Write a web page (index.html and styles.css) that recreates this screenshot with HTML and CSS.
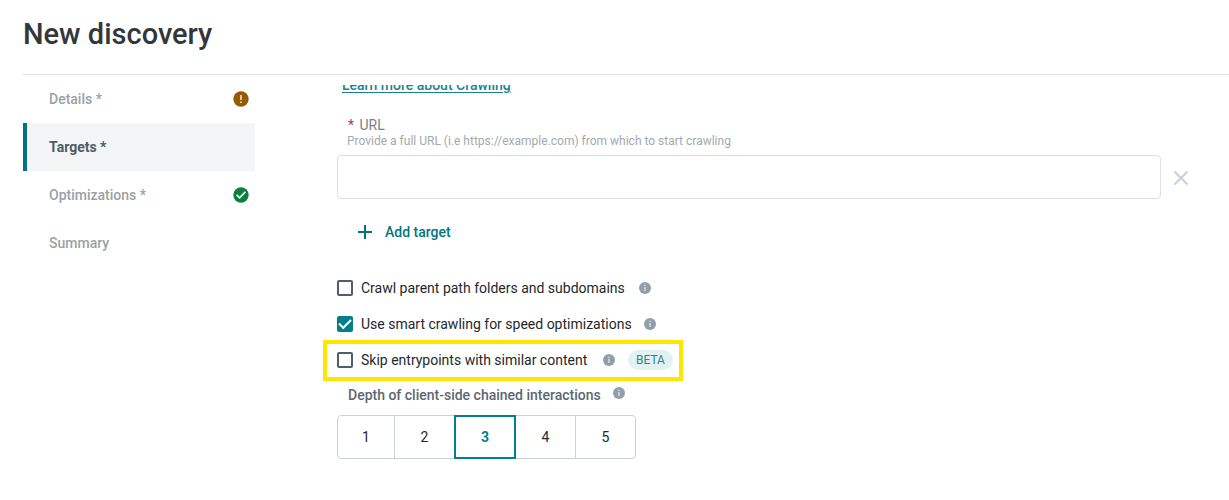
FILE: index.html
```html
<!DOCTYPE html>
<html lang="en">
<head>
<meta charset="utf-8">
<title>New discovery</title>
<link rel="stylesheet" href="styles.css">
</head>
<body>
<svg class="sprite" aria-hidden="true">
  <symbol id="info" viewBox="0 0 12 12">
    <circle cx="6" cy="6" r="6" fill="#919fa8"/>
    <path d="M6 2.7v1.2M6 5v4" stroke="#e8edef" stroke-width="1.2"/>
  </symbol>
</svg>
<header class="header">
  <h1 class="title">New discovery</h1>
</header>
<div class="layout">
  <nav class="steps" aria-label="Steps">
    <a class="step" href="#details">Details *
      <svg class="status" viewBox="0 0 16 16" aria-hidden="true"><circle cx="8" cy="8" r="7.7" fill="#965a00"/><path d="M8 4v5M8 10.5v1.6" stroke="#f3e6d0" stroke-width="1.6"/></svg>
    </a>
    <a class="step step-active" href="#targets" aria-current="step">Targets *</a>
    <a class="step" href="#optimizations">Optimizations *
      <svg class="status" viewBox="0 0 16 16" aria-hidden="true"><circle cx="8" cy="8" r="7.7" fill="#0b7f3f"/><path d="M3.6 7.8l3 3 5.8-6" fill="none" stroke="#fff" stroke-width="1.6"/></svg>
    </a>
    <a class="step" href="#summary">Summary</a>
  </nav>
  <main class="panel">
    <a class="learn" href="#crawling">Learn more about Crawling</a>
    <div class="field">
      <label class="label" for="url"><span class="required">*</span> URL</label>
      <p class="hint" id="url-hint">Provide a full URL (i.e https://example.com) from which to start crawling</p>
      <div class="entry">
        <input class="input" id="url" type="text" aria-describedby="url-hint">
        <button class="remove" type="button" aria-label="Remove target">
          <svg class="remove-icon" viewBox="0 0 16 16" aria-hidden="true"><path d="M1.5 1.5l13 13M14.5 1.5l-13 13" stroke="#c8d2d6" stroke-width="2.2"/></svg>
        </button>
      </div>
    </div>
    <button class="add" type="button">
      <svg class="add-icon" viewBox="0 0 14 14" aria-hidden="true"><path d="M7 0v14M0 7h14" stroke="#007480" stroke-width="2"/></svg>
      Add target
    </button>
    <div class="options">
      <div class="option">
        <input class="check" type="checkbox" id="parent">
        <label class="label-parent" for="parent">Crawl parent path folders and subdomains</label>
        <svg class="info" aria-hidden="true"><use href="#info"/></svg>
      </div>
      <div class="option">
        <input class="check" type="checkbox" id="smart" checked>
        <label class="label-smart" for="smart">Use smart crawling for speed optimizations</label>
        <svg class="info" aria-hidden="true"><use href="#info"/></svg>
      </div>
      <div class="option option-highlight">
        <input class="check" type="checkbox" id="skip">
        <label class="label-skip" for="skip">Skip entrypoints with similar content</label>
        <svg class="info" aria-hidden="true"><use href="#info"/></svg>
        <span class="badge">BETA</span>
      </div>
    </div>
    <div class="depth-label">
      <span class="depth-text" id="depth">Depth of client-side chained interactions</span>
      <svg class="info" aria-hidden="true"><use href="#info"/></svg>
    </div>
    <div class="depth" role="group" aria-labelledby="depth">
      <button class="level" type="button">1</button>
      <button class="level" type="button">2</button>
      <button class="level level-active" type="button" aria-pressed="true">3</button>
      <button class="level" type="button">4</button>
      <button class="level" type="button">5</button>
    </div>
  </main>
</div>
</body>
</html>
```
FILE: styles.css
```css
* { box-sizing: border-box; }
body {
  margin: 0;
  background: #fff;
  color: #23282b;
  font: 14px/20px Roboto, "Noto Sans", sans-serif;
}
button, input { font: inherit; color: inherit; }
button { background: none; border: 0; padding: 0; cursor: pointer; }
.sprite { display: none; }
.header {
  margin-left: 23px;
  padding: 16px 0 22px;
  border-bottom: 1px solid #dedfe0;
}
.title {
  margin: 0;
  color: #333739;
  font-size: 29px;
  line-height: 36px;
  font-weight: 500;
}
.layout {
  display: grid;
  grid-template-columns: 232px minmax(0, 1fr);
  gap: 68px;
  padding: 0 40px 0 23px;
}
.step {
  display: flex;
  align-items: center;
  justify-content: space-between;
  height: 48px;
  padding: 0 6px 0 22px;
  border-left: 4px solid transparent;
  color: #98a2a6;
  font-weight: 500;
  text-decoration: none;
}
.step-active {
  border-color: #007480;
  background: #f3f5f7;
  color: #4d5c65;
  font-weight: 700;
}
.status { width: 16px; height: 16px; }
.panel {
  margin-top: 10px;
  padding: 0 0 24px 14px;
  overflow: hidden;
}
.learn {
  display: block;
  width: fit-content;
  margin: -10px 0 22px 5px;
  color: #1b828d;
  font-weight: 500;
  text-underline-offset: 2px;
}
.label {
  display: block;
  padding-left: 11px;
  color: #7b7f81;
  line-height: 16px;
}
.required { margin-right: 2px; color: #bf3158; }
.hint {
  margin: 0 0 6px 10px;
  color: #a1aaad;
  font-size: 12px;
  line-height: 16px;
}
.entry { display: flex; align-items: center; gap: 12px; }
.input {
  flex: 1;
  min-width: 0;
  height: 44px;
  padding: 0 12px;
  border: 1px solid #dddfe0;
  border-radius: 4px;
  background: #fff;
}
.remove { display: flex; padding-top: 2px; }
.remove-icon { width: 16px; height: 16px; }
.add {
  display: flex;
  align-items: center;
  gap: 13px;
  height: 40px;
  margin: 13px 0 18px 21px;
  color: #007480;
  font-weight: 500;
}
.add-icon { width: 14px; height: 14px; }
.option { display: flex; align-items: center; height: 36px; }
.label-parent { min-width: 273px; }
.label-smart { min-width: 278px; }
.label-skip { min-width: 237px; }
.check {
  appearance: none;
  display: grid;
  place-items: center;
  width: 16px;
  height: 16px;
  margin: 0 8px 0 0;
  border: 2px solid #4d606b;
  border-radius: 2px;
}
.check:checked { border-color: #007f8c; background: #007f8c; }
.check:checked::before {
  content: "";
  width: 10px;
  height: 5px;
  margin-bottom: 3px;
  border: solid #fff;
  border-width: 0 0 2px 2px;
  transform: rotate(-45deg);
}
.info { flex: none; width: 12px; height: 12px; margin-left: 5px; }
.option-highlight {
  width: fit-content;
  height: 41px;
  margin: -2px 0 0 -14px;
  padding: 0 6px 1px 10px;
  border: 4px solid #ffe600;
}
.badge {
  margin-left: 13px;
  padding: 0 8px;
  border-radius: 10px;
  background: #e2f2f3;
  color: #2a8790;
  font-size: 12px;
}
.depth-label {
  display: flex;
  align-items: center;
  margin: 4px 0 10px 11px;
  color: #5a6870;
  font-weight: 500;
}
.depth-text { min-width: 260px; }
.depth-label .info { margin-bottom: 4px; }
.depth { display: flex; width: fit-content; }
.level {
  width: 61px;
  height: 44px;
  margin-left: -1px;
  border: 1px solid #c9d2d6;
}
.level:first-child { width: 58px; margin-left: 0; border-radius: 4px 0 0 4px; }
.level:last-child { border-radius: 0 4px 4px 0; }
.level-active {
  z-index: 1;
  width: 62px;
  border: 2px solid #007f8c;
  color: #007f8c;
  font-weight: 700;
}
```
